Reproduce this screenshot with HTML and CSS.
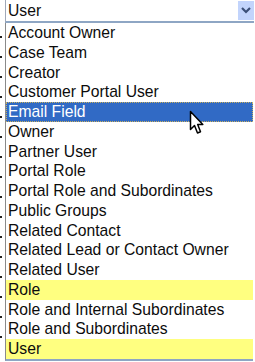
FILE: index.html
```html
<!DOCTYPE html>
<html>
<head>
<meta charset="utf-8">
<link rel="stylesheet" href="styles.css">
</head>
<body>
<div class="page">
  <div class="gutter"></div>
  <div class="widget">
    <div class="select">
      <span class="value">User</span>
      <span class="btn"><svg width="10" height="7" viewBox="0 0 10 7"><path d="M1 1 L5 5 L9 1" fill="none" stroke="#3b4f78" stroke-width="2.2"/></svg></span>
    </div>
    <ul class="list">
      <li>Account Owner</li>
      <li>Case Team</li>
      <li>Creator</li>
      <li>Customer Portal User</li>
      <li class="sel">Email Field</li>
      <li>Owner</li>
      <li>Partner User</li>
      <li>Portal Role</li>
      <li>Portal Role and Subordinates</li>
      <li>Public Groups</li>
      <li>Related Contact</li>
      <li>Related Lead or Contact Owner</li>
      <li>Related User</li>
      <li class="hl">Role</li>
      <li>Role and Internal Subordinates</li>
      <li>Role and Subordinates</li>
      <li class="hl">User</li>
    </ul>
  </div>
</div>
<svg class="cursor" width="15" height="26" viewBox="0 0 15 26"><path d="M1.5 1.5 L1.5 19.5 L5.5 15.5 L8.5 23 L11.5 21.8 L8.7 14.5 L13.8 14.5 Z" fill="#fff" stroke="#000" stroke-width="1.5" stroke-linejoin="round"/></svg>
</body>
</html>
```
FILE: styles.css
```css
html, body { margin: 0; padding: 0; background: #fff; }
body { width: 255px; height: 362px; overflow: hidden; position: relative; font-family: "Liberation Sans", Arial, sans-serif; }
.page { display: flex; }
.gutter { width: 2px; margin-right: 3px; margin-top: 30px; height: 320px; background: repeating-linear-gradient(to bottom, transparent 0 6px, #222 6px 8px, transparent 8px 20px); }
.widget { width: 249px; }
.select { height: 21px; display: flex; align-items: center; justify-content: space-between; border-left: 1px solid #a0a8b8; border-bottom: 2px solid #8ea6c4; }
.value { font-size: 15.7px; color: #0c0c0c; padding-left: 2px; padding-top: 1px; }
.btn { width: 16px; height: 19px; background: #c2d4fc; display: flex; align-items: center; justify-content: center; }
.list { list-style: none; margin: 0; padding: 0; border-left: 1px solid #8a8a8a; border-bottom: 2px solid #8ea6c4; width: 247px; }
.list li { height: 19.75px; line-height: 19.75px; font-size: 15.7px; color: #0c0c0c; padding-left: 2px; white-space: nowrap; box-sizing: border-box; }
.list li.sel { background: #316ac5; color: #fff; outline: 1px dotted #c8b060; outline-offset: -1px; }
.list li.hl { background: #ffff80; }
.cursor { position: absolute; left: 189px; top: 110px; }
```
